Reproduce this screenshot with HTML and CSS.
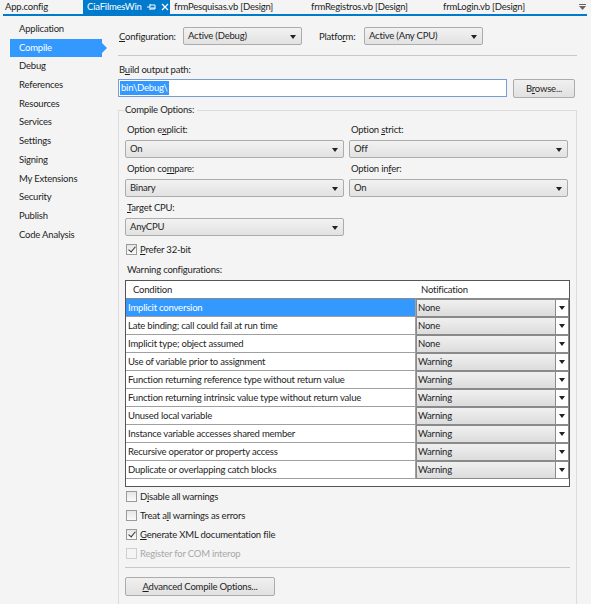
FILE: index.html
```html
<!DOCTYPE html>
<html lang="en">
<head>
  <meta charset="UTF-8">
  <title>CiaFilmesWin - Compile</title>
  <link rel="stylesheet" href="styles.css">
</head>
<body>
  <!-- abas do documento -->
  <div class="tabs">
    <div class="tab t1">App.config</div>
    <div class="tab active"><span class="tab-name">CiaFilmesWin</span>
      <svg class="pin" width="9" height="8" viewBox="0 0 9 8"><path d="M0 4h3M3 1v6M3 2h5v4H3M4 5h4" stroke="#fff" fill="none" stroke-width="1"/></svg>
      <svg class="close" width="8" height="8" viewBox="0 0 8 8"><path d="M1 1l6 6M7 1L1 7" stroke="#fff" stroke-width="1.2"/></svg>
    </div>
    <div class="tab t3">frmPesquisas.vb [Design]</div>
    <div class="tab t4">frmRegistros.vb [Design]</div>
    <div class="tab t5">frmLogin.vb [Design]</div>
    <div class="tab-menu">
      <svg width="9" height="8" viewBox="0 0 9 8"><path d="M1 1.5h7" stroke="#666"/><path d="M1 3h7L4.5 7z" fill="#666"/></svg>
    </div>
  </div>

  <div class="layout">
    <!-- menu lateral -->
    <div class="nav">
      <div class="nav-item">Application</div>
      <div class="nav-item selected">Compile</div>
      <div class="nav-item">Debug</div>
      <div class="nav-item">References</div>
      <div class="nav-item">Resources</div>
      <div class="nav-item">Services</div>
      <div class="nav-item">Settings</div>
      <div class="nav-item">Signing</div>
      <div class="nav-item">My Extensions</div>
      <div class="nav-item">Security</div>
      <div class="nav-item">Publish</div>
      <div class="nav-item">Code Analysis</div>
    </div>

    <div class="main">
      <div class="config-row">
        <span class="lbl cfg"><u>C</u>onfiguration:</span>
        <div class="combo w120">Active (Debug)</div>
        <span class="lbl platform">Platfo<u>r</u>m:</span>
        <div class="combo w120">Active (Any CPU)</div>
      </div>
      <div class="sep"></div>

      <div class="field-label">B<u>u</u>ild output path:</div>
      <div class="path-row">
        <div class="textbox"><span class="sel">bin\Debug\</span></div>
        <div class="btn browse">B<u>r</u>owse...</div>
      </div>

      <div class="group">
        <div class="group-title">Compile Options:</div>

        <div class="opt-grid">
          <div class="opt">
            <div class="opt-label">Option e<u>x</u>plicit:</div>
            <div class="combo">On</div>
          </div>
          <div class="opt">
            <div class="opt-label">Option <u>s</u>trict:</div>
            <div class="combo">Off</div>
          </div>
          <div class="opt">
            <div class="opt-label">Option co<u>m</u>pare:</div>
            <div class="combo">Binary</div>
          </div>
          <div class="opt">
            <div class="opt-label">Option in<u>f</u>er:</div>
            <div class="combo">On</div>
          </div>
          <div class="opt">
            <div class="opt-label"><u>T</u>arget CPU:</div>
            <div class="combo">AnyCPU</div>
          </div>
        </div>

        <div class="check-row"><span class="check on"></span><span><u>P</u>refer 32-bit</span></div>

        <div class="opt-label warn-label">Warning configurations:</div>
        <div class="grid">
          <div class="grid-head">
            <div class="c-cond">Condition</div>
            <div class="c-notif">Notification</div>
          </div>
          <div class="grid-rows" id="rows"></div>
        </div>

        <div class="checks">
          <div class="check-row"><span class="check"></span><span>D<u>i</u>sable all warnings</span></div>
          <div class="check-row"><span class="check"></span><span>Treat a<u>l</u>l warnings as errors</span></div>
          <div class="check-row"><span class="check on"></span><span><u>G</u>enerate XML documentation file</span></div>
          <div class="check-row disabled"><span class="check"></span><span>Register for COM interop</span></div>
        </div>
        <div class="sep inner"></div>
        <div class="btn advanced"><u>A</u>dvanced Compile Options...</div>
      </div>
    </div>
  </div>

  <script>
    const avisos = [
      ['Implicit conversion', 'None'],
      ['Late binding; call could fail at run time', 'None'],
      ['Implicit type; object assumed', 'None'],
      ['Use of variable prior to assignment', 'Warning'],
      ['Function returning reference type without return value', 'Warning'],
      ['Function returning intrinsic value type without return value', 'Warning'],
      ['Unused local variable', 'Warning'],
      ['Instance variable accesses shared member', 'Warning'],
      ['Recursive operator or property access', 'Warning'],
      ['Duplicate or overlapping catch blocks', 'Warning']
    ];
    const rows = document.getElementById('rows');
    avisos.forEach(([cond, nivel], i) => {
      const div = document.createElement('div');
      div.className = 'grid-row' + (i === 0 ? ' selected' : '');
      div.innerHTML = `
        <div class="c-cond">${cond}</div>
        <div class="c-notif"><div class="cell-combo">${nivel}<span class="cell-arrow"></span></div></div>`;
      rows.appendChild(div);
    });
  </script>
</body>
</html>
```

FILE: styles.css
```css
* {
  margin: 0;
  padding: 0;
  box-sizing: border-box;
}
body {
  width: 591px;
  height: 604px;
  overflow: hidden;
  background: #f4f4f4;
  color: #1e1e1e;
  font-family: Lato, "Open Sans", sans-serif;
  font-size: 9.5px;
  letter-spacing: -0.2px;
}
u {
  text-decoration: underline;
}

/* abas */
.tabs {
  display: flex;
  height: 16px;
  border-bottom: 2px solid #007acc;
  margin-left: 3px;
  margin-right: 4px;
}
.tab {
  padding-left: 4px;
  line-height: 14px;
  white-space: nowrap;
  flex-shrink: 0;
}
.t1 {
  width: 80px;
  padding-left: 2px;
}
.tab.active {
  background: #007acc;
  color: #fff;
  width: 87px;
  display: flex;
  align-items: center;
}
.tab-name {
  width: 60px;
}
.tab.active .close {
  margin-left: 5px;
}
.t3 {
  width: 136px;
}
.t4 {
  width: 132px;
  padding-left: 5px;
}
.t5 {
  width: 120px;
  padding-left: 5px;
}
.tab-menu {
  margin-left: auto;
  padding-top: 2px;
}

.layout {
  display: flex;
}

/* menu lateral */
.nav {
  width: 116px;
  flex-shrink: 0;
  padding-top: 4px;
  padding-left: 10px;
}
.nav-item {
  height: 18.7px;
  line-height: 18px;
  padding-left: 9px;
  position: relative;
  width: 92px;
}
.nav-item.selected {
  background: #3399ff;
  color: #fff;
}
.nav-item.selected::after {
  content: "";
  position: absolute;
  right: -5px;
  top: 4px;
  border-left: 5px solid #3399ff;
  border-top: 5px solid transparent;
  border-bottom: 5px solid transparent;
}

/* painel principal */
.main {
  flex: 1;
  padding-top: 11px;
  padding-left: 2px;
  padding-right: 16px;
}
.config-row {
  display: flex;
  align-items: center;
  height: 18px;
}
.lbl {
  padding-left: 1px;
  flex-shrink: 0;
}
.lbl.cfg {
  width: 65px;
}
.lbl.platform {
  margin-left: 16px;
  width: 46px;
}
.combo {
  height: 18px;
  line-height: 16px;
  border: 1px solid #acacac;
  border-radius: 2px;
  background: linear-gradient(#f2f2f2, #e2e2e2);
  padding-left: 4px;
  position: relative;
}
.combo::after {
  content: "";
  position: absolute;
  right: 5px;
  top: 7px;
  border-top: 4px solid #222;
  border-left: 3px solid transparent;
  border-right: 3px solid transparent;
}
.w120 {
  width: 119px;
}
.sep {
  height: 1px;
  background: #c8c8c8;
  margin-top: 10px;
}
.field-label {
  margin-top: 6px;
  line-height: 16px;
  padding-left: 1px;
}
.path-row {
  display: flex;
  gap: 6px;
  margin-top: 1px;
}
.textbox {
  width: 389px;
  height: 18px;
  border: 1px solid #7a9cd3;
  background: #fff;
  padding: 1px;
  line-height: 14px;
}
.sel {
  background: #3399ff;
  color: #fff;
  padding: 0 1px;
  display: inline-block;
}
.btn {
  height: 19px;
  line-height: 17px;
  text-align: center;
  border: 1px solid #acacac;
  border-radius: 2px;
  background: linear-gradient(#f0f0f0, #e1e1e1);
}
.browse {
  width: 62px;
}

/* caixa de grupo */
.group {
  margin-top: 12px;
  border: 1px solid #dcdcdc;
  border-bottom: none;
  padding: 0 6px;
  height: 500px;
}
.group-title {
  display: table;
  line-height: 14px;
  margin-top: -8px;
  background: #f4f4f4;
  padding-right: 3px;
}
.opt-grid {
  display: grid;
  grid-template-columns: 219px 219px;
  column-gap: 5px;
  margin-top: 6px;
}
.opt {
  margin-bottom: 4px;
}
.opt-label {
  line-height: 14px;
  margin-bottom: 3px;
  padding-left: 2px;
}

.check-row {
  display: flex;
  align-items: center;
  height: 19px;
  gap: 3px;
  padding-left: 1px;
}
.check {
  width: 11px;
  height: 11px;
  border: 1px solid #9a9a9a;
  background: linear-gradient(#e6e6e6, #fafafa);
  position: relative;
}
.check.on::after {
  content: "";
  position: absolute;
  left: 3px;
  top: 0;
  width: 3px;
  height: 6px;
  border-right: 1.5px solid #333;
  border-bottom: 1.5px solid #333;
  transform: rotate(40deg);
}
.warn-label {
  margin-top: 4px;
}

/* tabela de avisos */
.grid {
  width: 445px;
  height: 207px;
  border: 1px solid #555;
  background: #fff;
}
.grid-head {
  display: flex;
  height: 18px;
  line-height: 17px;
  border-bottom: 1px solid #8a8a8a;
}
.grid-head .c-cond {
  width: 289px;
  padding-left: 7px;
}
.grid-head .c-notif {
  padding-left: 6px;
}
.grid-row {
  display: flex;
  height: 18px;
}
.grid-row .c-cond {
  width: 289px;
  padding-left: 2px;
  line-height: 17px;
  border-bottom: 1px solid #a0a0a0;
  white-space: nowrap;
}
.grid-row.selected .c-cond {
  background: #3399ff;
  color: #fff;
}
.grid-row .c-notif {
  width: 154px;
  border-left: 1px solid #a0a0a0;
}
.cell-combo {
  height: 18px;
  line-height: 16px;
  border: 1px solid #8a8a8a;
  background: linear-gradient(#f0f0f0, #dcdcdc);
  padding-left: 1px;
  position: relative;
}
.cell-arrow {
  position: absolute;
  right: 0;
  top: 0;
  width: 13px;
  height: 16px;
  border-left: 1px solid #8a8a8a;
  background: #fff;
}
.cell-arrow::after {
  content: "";
  position: absolute;
  left: 3px;
  top: 6px;
  border-top: 4px solid #222;
  border-left: 3px solid transparent;
  border-right: 3px solid transparent;
}

.check-row.disabled {
  color: #a8a8a8;
}
.check-row.disabled .check {
  border-color: #cfcfcf;
  background: #f4f4f4;
}
.sep.inner {
  margin-top: 4px;
}
.advanced {
  width: 150px;
  margin-top: 9px;
}
```
